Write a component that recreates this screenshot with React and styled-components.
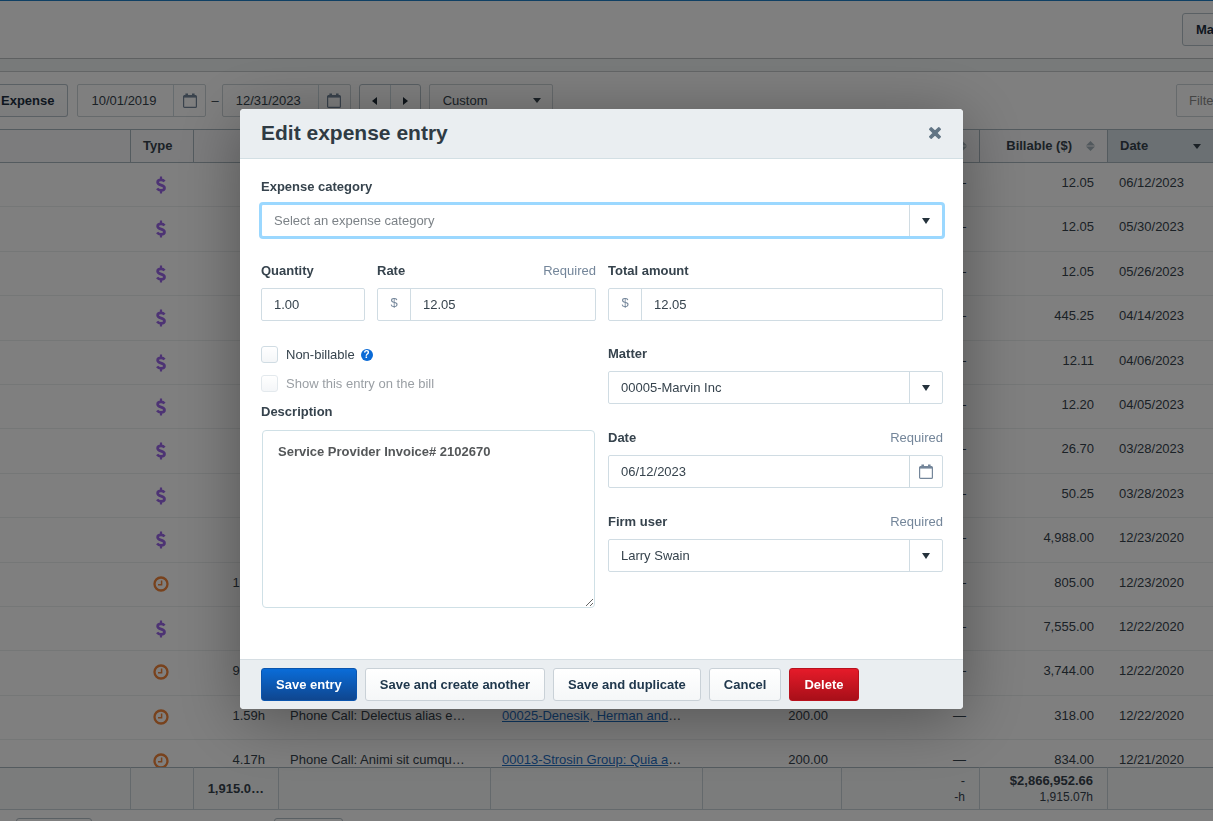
import React from "react";
import styled, { createGlobalStyle, css } from "styled-components";

const Global = createGlobalStyle`
  *, *::before, *::after { box-sizing: border-box; }
  body { margin: 0; background: #fff; overflow: hidden; }
  body, button, input, select, textarea {
    font-family: "Liberation Sans", Arial, sans-serif;
    font-size: 13px;
    line-height: 16px;
    color: #36434d;
  }
`;

/* ---------- page behind the dialog ---------- */

const Page = styled.main`
  display: flex;
  flex-direction: column;
  height: 100vh;
  overflow: hidden;
  background: #fff;
`;

const TopBar = styled.header`
  display: flex;
  justify-content: flex-end;
  align-items: center;
  flex: none;
  height: 59px;
  border-top: 1px solid #1f80c8;
  border-bottom: 1px solid #bcc0c2;
`;

const Band = styled.div`
  flex: none;
  height: 13px;
  background: #f1f4f4;
  border-bottom: 1px solid #c6cacc;
`;

const Toolbar = styled.div`
  display: flex;
  align-items: center;
  flex: none;
  height: 57px;
`;

const Spacer = styled.div`
  flex: 1;
`;

const Clip = styled.div`
  display: flex;
  overflow: hidden;
  width: ${(p) => p.$width}px;
`;

const ToolButton = styled.button`
  flex: none;
  height: 33px;
  padding: 0 13px;
  border: 1px solid #b4c0c8;
  border-radius: 3px;
  background: linear-gradient(#fff, #f8f9fa);
  color: #1d2f40;
  font-weight: bold;
  text-align: left;
  ${(p) => p.$cutLeft && css`
    border-left: 0;
    border-radius: 0 3px 3px 0;
    padding-left: 1px;
  `}
`;

const WideButton = styled(ToolButton)`
  width: 120px;
`;

const DateBox = styled.div`
  display: flex;
  width: 129px;
  height: 33px;
  margin-left: ${(p) => p.$gap}px;
  border: 1px solid #ccd4d8;
  border-radius: 2px;
`;

const DateInput = styled.input`
  flex: 1;
  min-width: 0;
  padding: 0 0 0 13px;
  border: 0;
  background: transparent;
  outline: 0;
`;

const IconButton = styled.button`
  display: flex;
  align-items: center;
  justify-content: center;
  flex: none;
  width: 32px;
  padding: 0;
  border: 0;
  border-left: 1px solid #ccd9df;
  background: transparent;
  color: #74869a;
`;

const Dash = styled.span`
  margin-left: 5px;
`;

const Stepper = styled.div`
  display: flex;
  height: 33px;
  margin-left: 8px;
  border: 1px solid #b4c0c8;
  border-radius: 3px;
  button { width: 30px; color: #1d2a35; }
  button:first-child { border-left: 0; }
`;

const RangeBox = styled.div`
  display: flex;
  align-items: center;
  width: 124px;
  height: 33px;
  margin-left: 8px;
  padding: 0 11px 0 13px;
  border: 1px solid #ccd4d8;
  border-radius: 2px;
`;

const PlainSelect = styled.select`
  flex: 1;
  min-width: 0;
  height: 100%;
  padding: 0;
  border: 0;
  outline: 0;
  appearance: none;
  background: transparent;
  color: inherit;
`;

const FilterInput = styled.input`
  flex: none;
  width: 200px;
  height: 33px;
  padding: 0 12px;
  border: 1px solid #ccd4d8;
  border-radius: 2px;
  &::placeholder { color: #8a8a8a; opacity: 1; }
`;

const TableArea = styled.div`
  flex: 1;
  min-height: 0;
  overflow: hidden;
`;

const Grid = styled.table`
  width: 100%;
  table-layout: fixed;
  border-collapse: separate;
  border-spacing: 0;
`;

const EntryRow = styled.tr`
  height: 44px;
  &:nth-child(5n + 2), &:nth-child(5n + 4) { height: 45px; }
`;

const HeadCell = styled.th`
  height: 34px;
  padding: 0 12px;
  border: solid #a9b7bf;
  border-width: 1px 0 1px ${(p) => (p.$first ? 0 : 1)}px;
  background: ${(p) => (p.$sorted ? "#d6e0e7" : "#f8f9fa")};
  font-weight: bold;
  text-align: left;
`;

const HeadContent = styled.span`
  display: flex;
  align-items: center;
  justify-content: ${(p) => (p.$sorted ? "space-between" : "flex-end")};
  gap: 14px;
`;

const Cell = styled.td`
  padding: 12px 13px 0 12px;
  vertical-align: top;
  border-bottom: 1px solid #ebeeef;
  text-align: ${(p) => p.$align || "left"};
  white-space: nowrap;
  svg { display: block; margin: 1px auto 0; }
`;

const MatterLink = styled.a`
  color: #1f6fc4;
  text-decoration: underline;
`;

const TotalCell = styled.td`
  height: 43px;
  padding: 0 14px 0 12px;
  border: solid #c9d3d9;
  border-width: 1px 0 1px ${(p) => (p.$first ? 0 : 1)}px;
  border-top-color: #a9b7bf;
  background: #f6f8f9;
  font-weight: ${(p) => (p.$bold ? "bold" : "normal")};
  text-align: right;
  white-space: nowrap;
`;

const SubTotal = styled.div`
  font-size: 12px;
  font-weight: normal;
`;

const Pager = styled.div`
  flex: 0 0 11px;
  display: flex;
  gap: 182px;
  padding: 8px 16px 0;
  overflow: hidden;
`;

const PagerButton = styled.button`
  flex: none;
  width: ${(p) => p.$width}px;
  height: 33px;
  border: 1px solid #b4c0c8;
  border-radius: 3px;
  background: #fff;
`;

/* ---------- dialog ---------- */

const Backdrop = styled.div`
  position: fixed;
  inset: 0;
  display: flex;
  align-items: flex-start;
  justify-content: center;
  padding: 109px 10px 0 0;
  background: rgba(0, 0, 0, 0.5);
`;

const Dialog = styled.form`
  width: 100%;
  max-width: 723px;
  border-radius: 4px;
  overflow: hidden;
  background: #fff;
  box-shadow: 0 10px 64px rgba(0, 0, 0, 0.35);
`;

const DialogHead = styled.div`
  display: flex;
  align-items: center;
  justify-content: space-between;
  height: 50px;
  padding: 0 21px 2px;
  border-bottom: 1px solid #d3dfe4;
  background: #eaeef1;
`;

const Title = styled.h2`
  margin: 0;
  font-size: 21px;
  line-height: 24px;
  color: #2f3b44;
`;

const CloseButton = styled.button`
  display: flex;
  padding: 0;
  border: 0;
  background: none;
  color: #627585;
`;

const DialogBody = styled.div`
  padding: 20px 20px 51px 21px;
`;

const Columns = styled.div`
  display: grid;
  grid-template-columns: minmax(0, 1fr) minmax(0, 1fr);
  column-gap: 12px;
  margin-top: ${(p) => p.$top}px;
`;

const Stack = styled.div`
  display: flex;
  flex-direction: column;
  gap: ${(p) => p.$gap}px;
`;

const QuantityRate = styled.div`
  display: grid;
  grid-template-columns: 104px minmax(0, 1fr);
  column-gap: 12px;
`;

const Field = styled.div`
  display: flex;
  flex-direction: column;
  gap: ${(p) => p.$gap || 9}px;
`;

const LabelRow = styled.div`
  display: flex;
  justify-content: space-between;
  label { font-weight: bold; }
`;

const Required = styled.span`
  color: #74869a;
`;

const Control = styled.div`
  display: flex;
  align-items: stretch;
  height: 33px;
  border: 1px solid ${(p) => (p.$focused ? "#9bd8ff" : "#d0dce3")};
  border-radius: 2px;
  background: #fff;
  color: ${(p) => (p.$focused ? "#7c8287" : "inherit")};
  ${(p) => p.$focused && css`box-shadow: 0 0 0 2px #9bd8ff;`}
  ${PlainSelect} { padding-left: 12px; }
  ${IconButton} { width: 33px; }
`;

const TextInput = styled.input`
  flex: 1;
  min-width: 0;
  padding: 0 12px;
  border: 0;
  outline: 0;
  background: transparent;
`;

const Prefix = styled.span`
  flex: none;
  width: 33px;
  padding: 6px 0 0;
  border-right: 1px solid #d0dce3;
  color: #74869a;
  text-align: center;
`;

const Arrow = styled.span`
  display: flex;
  align-items: center;
  justify-content: center;
  flex: none;
  width: 33px;
  border-left: 1px solid #d0dce3;
  color: #25323c;
`;

const CheckRow = styled.label`
  display: flex;
  align-items: center;
  gap: 8px;
  height: 17px;
  color: ${(p) => (p.$muted ? "#9a9fa4" : "inherit")};
`;

const CheckBox = styled.input`
  appearance: none;
  flex: none;
  width: 17px;
  height: 17px;
  margin: 0;
  border: 1px solid #d0dce3;
  border-radius: 3px;
  background: linear-gradient(#fff, #f4f6f8);
  &:disabled { border-color: #e3e9ed; }
`;

const Help = styled.span`
  display: inline-flex;
  align-items: center;
  justify-content: center;
  width: 12px;
  height: 12px;
  margin-left: -2px;
  border-radius: 50%;
  background: #0a6ad6;
  color: #fff;
  font-size: 10px;
  font-weight: bold;
  line-height: 12px;
`;

const Description = styled.textarea`
  display: block;
  width: calc(100% - 2px);
  height: 178px;
  margin: 0 1px;
  padding: 13px 15px;
  border: 1px solid #cfe0e6;
  border-radius: 4px;
  outline: 0;
  resize: both;
  color: #545759;
  font-weight: bold;
`;

const DialogFoot = styled.div`
  display: flex;
  gap: 8px;
  padding: 8px 21px;
  border-top: 1px solid #d6dee3;
  background: #eaeef1;
`;

const tones = {
  primary: css`
    border-color: #0b55ae;
    background: linear-gradient(#0a6cd8, #0f468f);
    color: #fff;
  `,
  danger: css`
    border-color: #b8111d;
    background: linear-gradient(#e51b29, #a80f19);
    color: #fff;
  `,
  plain: css`
    border-color: #c9d1d7;
    background: linear-gradient(#fff, #f5f7f8);
    color: #20384d;
  `,
};

const ActionButton = styled.button`
  height: 33px;
  padding: 0 14px;
  border: 1px solid;
  border-radius: 3px;
  font-weight: bold;
  ${(p) => tones[p.$tone || "plain"]}
`;

/* ---------- drawings ---------- */

const Calendar = () => (
  <svg width="14" height="15" viewBox="0 0 14 15" fill="none">
    <rect x="0.6" y="2.6" width="12.8" height="11.8" rx="1" stroke="currentColor" strokeWidth="1.2" />
    <path d="M1 2.4h12v2.2H1z" fill="currentColor" />
    <path d="M3.7 0.6v3M10.3 0.6v3" stroke="currentColor" strokeWidth="2.6" />
  </svg>
);

const Triangle = ({ dir = "down", width = 8, height = 6 }) => {
  const shapes = {
    down: `M0 0H${width}L${width / 2} ${height}z`,
    left: `M${width} 0V${height}L0 ${height / 2}z`,
    right: `M0 0V${height}L${width} ${height / 2}z`,
  };
  return (
    <svg width={width} height={height} viewBox={`0 0 ${width} ${height}`}>
      <path d={shapes[dir]} fill="currentColor" />
    </svg>
  );
};

const SortMark = () => (
  <svg width="9" height="10" viewBox="0 0 9 10">
    <path d="M4.5 0L9 4.4H0zM0 5.6h9L4.5 10z" fill="#a3b1ba" />
  </svg>
);

const Clock = () => (
  <svg width="16" height="16" viewBox="0 0 16 16" fill="none" stroke="#f0843a">
    <circle cx="8" cy="8" r="6.5" strokeWidth="2.3" />
    <path d="M8.6 4.4v4.3H5" strokeWidth="1.5" />
  </svg>
);

const Dollar = () => (
  <svg width="10" height="18" viewBox="0 0 10 18" fill="none" stroke="#9a66e8">
    <path d="M5 0.4v3M5 14.6v3" strokeWidth="2.2" />
    <path
      d="M8.5 5.5C7.7 4.3 6.5 3.8 5 3.8 3.1 3.8 1.6 4.7 1.6 6.2c0 3.8 6.9 2 6.9 5.7 0 1.6-1.5 2.4-3.5 2.4-1.7 0-3-.6-3.9-1.8"
      strokeWidth="2.7"
    />
  </svg>
);

const Cross = () => (
  <svg width="14" height="14" viewBox="0 0 14 14" fill="currentColor" stroke="currentColor" strokeLinejoin="round">
    <path
      d="M3.2 1.7L7 5.4l3.8-3.7 1.5 1.5L8.6 7l3.7 3.8-1.5 1.5L7 8.6l-3.8 3.7-1.5-1.5L5.4 7 1.7 3.2z"
      strokeWidth="1.5"
    />
  </svg>
);

/* ---------- data ---------- */

const entries = [
  { type: "expense", billable: "12.05", date: "06/12/2023" },
  { type: "expense", billable: "12.05", date: "05/30/2023" },
  { type: "expense", billable: "12.05", date: "05/26/2023" },
  { type: "expense", billable: "445.25", date: "04/14/2023" },
  { type: "expense", billable: "12.11", date: "04/06/2023" },
  { type: "expense", billable: "12.20", date: "04/05/2023" },
  { type: "expense", billable: "26.70", date: "03/28/2023" },
  { type: "expense", billable: "50.25", date: "03/28/2023" },
  { type: "expense", billable: "4,988.00", date: "12/23/2020" },
  { type: "time", hours: "1.15h", billable: "805.00", date: "12/23/2020" },
  { type: "expense", billable: "7,555.00", date: "12/22/2020" },
  { type: "time", hours: "9.36h", billable: "3,744.00", date: "12/22/2020" },
  { type: "time", hours: "1.59h", text: "Phone Call: Delectus alias e…", matter: "00025-Denesik, Herman and", rate: "200.00", billable: "318.00", date: "12/22/2020" },
  { type: "time", hours: "4.17h", text: "Phone Call: Animi sit cumqu…", matter: "00013-Strosin Group: Quia a", rate: "200.00", billable: "834.00", date: "12/21/2020" },
];

const columnWidths = [undefined, 63, 85, 212, 212, 139, 138, 128, 106];

const ColumnSizes = () => (
  <colgroup>
    {columnWidths.map((w, i) => (
      <col key={i} width={w} />
    ))}
  </colgroup>
);

const SelectField = ({ id, label, value, required, focused }) => (
  <Field>
    <LabelRow>
      <label htmlFor={id}>{label}</label>
      {required && <Required>Required</Required>}
    </LabelRow>
    <Control $focused={focused}>
      <PlainSelect id={id}>
        <option>{value}</option>
      </PlainSelect>
      <Arrow><Triangle /></Arrow>
    </Control>
  </Field>
);

const AmountField = ({ id, label, required }) => (
  <Field>
    <LabelRow>
      <label htmlFor={id}>{label}</label>
      {required && <Required>Required</Required>}
    </LabelRow>
    <Control>
      <Prefix>$</Prefix>
      <TextInput id={id} defaultValue="12.05" />
    </Control>
  </Field>
);

const Activities = () => (
  <Page>
    <TopBar>
      <Clip $width={31}>
        <WideButton>Ma</WideButton>
      </Clip>
    </TopBar>
    <Band />
    <Toolbar>
      <ToolButton $cutLeft>Expense</ToolButton>
      <DateBox $gap={9}>
        <DateInput aria-label="From date" defaultValue="10/01/2019" />
        <IconButton aria-label="Pick from date"><Calendar /></IconButton>
      </DateBox>
      <Dash>–</Dash>
      <DateBox $gap={3}>
        <DateInput aria-label="To date" defaultValue="12/31/2023" />
        <IconButton aria-label="Pick to date"><Calendar /></IconButton>
      </DateBox>
      <Stepper>
        <IconButton aria-label="Previous"><Triangle dir="left" width={5} height={8} /></IconButton>
        <IconButton aria-label="Next"><Triangle dir="right" width={5} height={8} /></IconButton>
      </Stepper>
      <RangeBox>
        <PlainSelect aria-label="Range">
          <option>Custom</option>
        </PlainSelect>
        <Triangle height={5} />
      </RangeBox>
      <Spacer />
      <Clip $width={37}>
        <FilterInput aria-label="Filter" placeholder="Filte" />
      </Clip>
    </Toolbar>
    <TableArea>
      <Grid>
        <ColumnSizes />
        <thead>
          <tr>
            <HeadCell $first />
            <HeadCell>Type</HeadCell>
            <HeadCell />
            <HeadCell />
            <HeadCell />
            <HeadCell />
            <HeadCell><HeadContent><SortMark /></HeadContent></HeadCell>
            <HeadCell><HeadContent>Billable ($)<SortMark /></HeadContent></HeadCell>
            <HeadCell $sorted>
              <HeadContent $sorted>Date<Triangle height={5} /></HeadContent>
            </HeadCell>
          </tr>
        </thead>
        <tbody>
          {entries.map((e, i) => (
            <EntryRow key={i}>
              <Cell />
              <Cell>{e.type === "time" ? <Clock /> : <Dollar />}</Cell>
              <Cell $align="right">{e.hours}</Cell>
              <Cell>{e.text}</Cell>
              <Cell>{e.matter && <><MatterLink href="#matter">{e.matter}</MatterLink>…</>}</Cell>
              <Cell $align="right">{e.rate}</Cell>
              <Cell $align="right">—</Cell>
              <Cell $align="right">{e.billable}</Cell>
              <Cell>{e.date}</Cell>
            </EntryRow>
          ))}
        </tbody>
      </Grid>
    </TableArea>
    <Grid>
      <ColumnSizes />
      <tbody>
        <tr>
          <TotalCell $first />
          <TotalCell />
          <TotalCell $bold>1,915.0…</TotalCell>
          <TotalCell />
          <TotalCell />
          <TotalCell />
          <TotalCell>-<SubTotal>-h</SubTotal></TotalCell>
          <TotalCell $bold>$2,866,952.66<SubTotal>1,915.07h</SubTotal></TotalCell>
          <TotalCell />
        </tr>
      </tbody>
    </Grid>
    <Pager>
      <PagerButton $width={76} aria-label="Page" />
      <PagerButton $width={69} aria-label="Page size" />
    </Pager>
  </Page>
);

const ExpenseDialog = () => (
  <Backdrop>
    <Dialog role="dialog" aria-labelledby="dialog-title" onSubmit={(e) => e.preventDefault()}>
      <DialogHead>
        <Title id="dialog-title">Edit expense entry</Title>
        <CloseButton type="button" aria-label="Close"><Cross /></CloseButton>
      </DialogHead>
      <DialogBody>
        <SelectField id="category" label="Expense category" value="Select an expense category" focused />
        <Columns $top={26}>
          <QuantityRate>
            <Field>
              <LabelRow><label htmlFor="quantity">Quantity</label></LabelRow>
              <Control><TextInput id="quantity" defaultValue="1.00" /></Control>
            </Field>
            <AmountField id="rate" label="Rate" required />
          </QuantityRate>
          <AmountField id="total" label="Total amount" />
        </Columns>
        <Columns $top={25}>
          <Stack $gap={12}>
            <CheckRow>
              <CheckBox type="checkbox" />
              Non-billable
              <Help>?</Help>
            </CheckRow>
            <CheckRow $muted>
              <CheckBox type="checkbox" disabled />
              Show this entry on the bill
            </CheckRow>
            <Field $gap={10}>
              <LabelRow><label htmlFor="description">Description</label></LabelRow>
              <Description id="description" defaultValue="Service Provider Invoice# 2102670" />
            </Field>
          </Stack>
          <Stack $gap={26}>
            <SelectField id="matter" label="Matter" value="00005-Marvin Inc" />
            <Field>
              <LabelRow>
                <label htmlFor="date">Date</label>
                <Required>Required</Required>
              </LabelRow>
              <Control>
                <TextInput id="date" defaultValue="06/12/2023" />
                <IconButton type="button" aria-label="Pick date"><Calendar /></IconButton>
              </Control>
            </Field>
            <SelectField id="user" label="Firm user" value="Larry Swain" required />
          </Stack>
        </Columns>
      </DialogBody>
      <DialogFoot>
        <ActionButton $tone="primary">Save entry</ActionButton>
        <ActionButton type="button">Save and create another</ActionButton>
        <ActionButton type="button">Save and duplicate</ActionButton>
        <ActionButton type="button">Cancel</ActionButton>
        <ActionButton type="button" $tone="danger">Delete</ActionButton>
      </DialogFoot>
    </Dialog>
  </Backdrop>
);

export default function App() {
  return (
    <>
      <Global />
      <Activities />
      <ExpenseDialog />
    </>
  );
}
